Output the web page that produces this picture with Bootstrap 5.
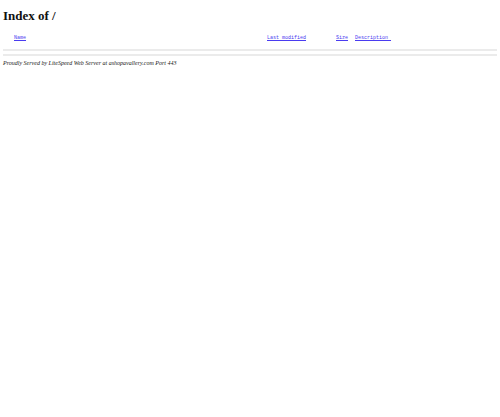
<!DOCTYPE html>
<html lang="en">
<head>
<meta charset="utf-8">
<meta name="viewport" content="width=device-width, initial-scale=1">
<title>Index of /</title>
<link href="https://cdn.jsdelivr.net/npm/bootstrap@5.3.0/dist/css/bootstrap.min.css" rel="stylesheet">
<style>
body { font-family: "Liberation Serif", serif; color: #000; padding: 8px 3px; }
h1 { font-size: 13px; line-height: 15px; margin-bottom: 11px; color: #111; }
.listing { font-family: "Liberation Mono", monospace; font-size: 5px; line-height: 8px; table-layout: fixed; margin-bottom: 7px; }
.listing th { padding: 0; font-weight: 400; white-space: pre; }
.listing a { color: #4a3cf0; }
.col-icon { width: 11px; }
.col-modified { width: 69px; }
.col-size { width: 19px; }
.col-desc { width: 142px; }
hr { margin: 0 0 3px; border-top: 2px solid #ebebeb; opacity: 1; }
address { font-size: 6px; line-height: 8px; font-style: italic; color: #222; }
</style>
</head>
<body>
<main>
<h1 class="fw-bold">Index of /</h1>
<table class="listing w-100">
<thead><tr>
<th class="col-icon"></th>
<th scope="col"><a href="?ND">Name</a></th>
<th scope="col" class="col-modified"><a href="?MA">Last modified</a></th>
<th scope="col" class="col-size"><a href="?SA">Size</a></th>
<th scope="col" class="col-desc"><a href="?DA">Description </a></th>
</tr></thead>
</table>
<hr>
<hr>
</main>
<address class="mb-0">Proudly Served by LiteSpeed Web Server at ashopavallery.com Port 443</address>
<script src="https://cdn.jsdelivr.net/npm/bootstrap@5.3.0/dist/js/bootstrap.bundle.min.js"></script>
</body>
</html>
